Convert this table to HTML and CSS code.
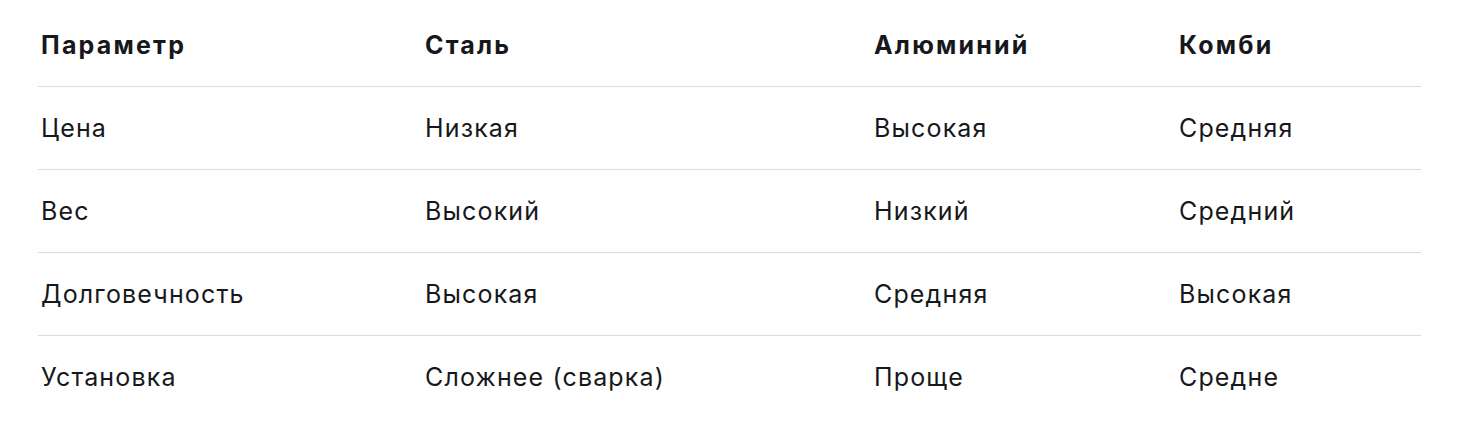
FILE: index.html
```html
<!DOCTYPE html>
<html lang="ru">
<head>
<meta charset="utf-8">
<title>Сравнение</title>
<link rel="stylesheet" href="styles.css">
</head>
<body>
<table class="cmp">
  <colgroup>
    <col class="c1"><col class="c2"><col class="c3"><col class="c4">
  </colgroup>
  <thead>
    <tr><th>Параметр</th><th>Сталь</th><th>Алюминий</th><th>Комби</th></tr>
  </thead>
  <tbody>
    <tr><td>Цена</td><td>Низкая</td><td>Высокая</td><td>Средняя</td></tr>
    <tr><td>Вес</td><td>Высокий</td><td>Низкий</td><td>Средний</td></tr>
    <tr><td>Долговечность</td><td>Высокая</td><td>Средняя</td><td>Высокая</td></tr>
    <tr><td>Установка</td><td>Сложнее (сварка)</td><td>Проще</td><td>Средне</td></tr>
  </tbody>
</table>
</body>
</html>
```

FILE: styles.css
```css
html, body { margin: 0; padding: 0; background: #fff; }
body {
  padding: 4px 53px 0 38px;
  font-family: Inter, "Noto Sans", sans-serif;
  color: #16181b;
}
.cmp {
  width: 1383px;
  border-collapse: collapse;
  table-layout: fixed;
  font-size: 25px;
}
.c1 { width: 384px; }
.c2 { width: 449px; }
.c3 { width: 305px; }
.c4 { width: 245px; }
.cmp th, .cmp td {
  height: 82px;
  padding: 0 3px;
  text-align: left;
  vertical-align: middle;
  border-bottom: 1px solid #d8dde3;
  white-space: nowrap;
}
.cmp th { font-weight: 700; letter-spacing: 2.2px; }
.cmp td { font-weight: 400; letter-spacing: 1.15px; }
.cmp tbody tr:last-child td { border-bottom: none; }
```
